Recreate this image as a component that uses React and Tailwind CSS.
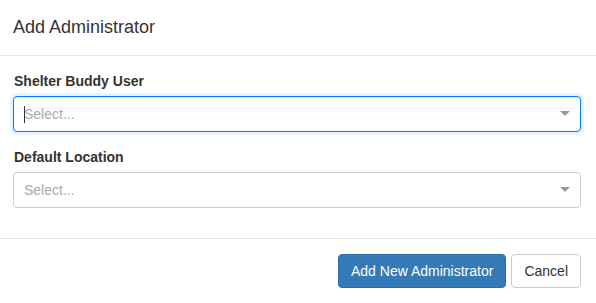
import React from 'react'

function SelectBox({ focused }) {
    return (
        <div
            className={`flex h-9 items-center rounded-[4px] border bg-white ${focused
                ? 'border-[#007eff] shadow-[inset_0_1px_1px_rgba(0,0,0,0.075),0_0_0_3px_rgba(0,126,255,0.1)]'
                : 'border-[#ccc]'
                }`}
        >
            <div className="relative flex-1 pl-[10px] text-[14px] leading-[34px] text-[#aaa]">
                {focused && <span className="absolute left-[10px] top-[9px] h-[17px] w-px bg-[#333]" />}
                Select...
            </div>
            <div className="flex w-[25px] items-center justify-center pr-[5px]">
                <span className="h-0 w-0 border-x-[5px] border-t-[5px] border-b-[2.5px] border-x-transparent border-b-transparent border-t-[#999]" />
            </div>
        </div>
    )
}

export default function App() {
    return (
        <div className="h-[303px] w-[596px] bg-white text-[#333]" style={{ fontFamily: '"Liberation Sans", Arial, sans-serif' }}>
            {/* Header */}
            <div className="border-b border-[#e5e5e5] py-[15px] pl-[13px] pr-[15px]">
                <h4 className="text-[18px] leading-[25px]">Add Administrator</h4>
            </div>

            {/* Body */}
            <div className="py-[15px] pl-[13px] pr-[15px]">
                <div className="mb-[15px]">
                    <label className="mb-[5px] block pl-px text-[14px] font-bold leading-[20px]">Shelter Buddy User</label>
                    <SelectBox focused />
                </div>
                <div className="mb-[15px]">
                    <label className="mb-[5px] block pl-px text-[14px] font-bold leading-[20px]">Default Location</label>
                    <SelectBox />
                </div>
            </div>

            {/* Footer */}
            <div className="flex justify-end gap-[5px] border-t border-[#e5e5e5] py-[15px] pl-[13px] pr-[15px]">
                <button className="h-[34px] rounded-[4px] border border-[#2e6da4] bg-[#337ab7] px-3 text-[14px] text-white">
                    Add New Administrator
                </button>
                <button className="h-[34px] rounded-[4px] border border-[#ccc] bg-white px-3 text-[14px] text-[#333]">
                    Cancel
                </button>
            </div>
        </div>
    )
}
